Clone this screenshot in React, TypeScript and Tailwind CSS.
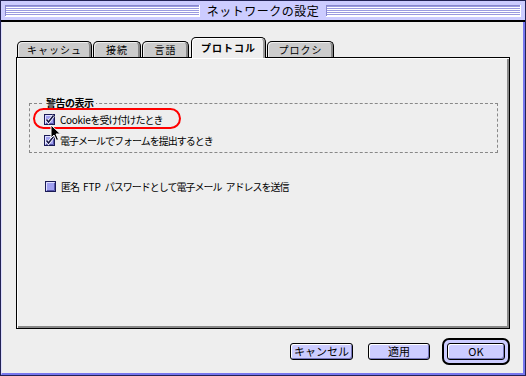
import React from "react";

const Check = ({ checked }: { checked: boolean }) => (
  <svg width="11" height="11" viewBox="0 0 11 11" className="shrink-0">
    <rect x="0.5" y="0.5" width="10" height="10" fill="#a0a0f0" stroke="#1a1a55" />
    <line x1="1.5" y1="1.5" x2="9.5" y2="1.5" stroke="#e0e0ff" />
    <line x1="1.5" y1="1.5" x2="1.5" y2="9.5" stroke="#e0e0ff" />
    <line x1="9.5" y1="2" x2="9.5" y2="9.5" stroke="#5555aa" />
    <line x1="2" y1="9.5" x2="9.5" y2="9.5" stroke="#5555aa" />
    {checked && (
      <>
        <path d="M2.5 5.5 L4.5 8 L9.5 1.5" fill="none" stroke="#ffffff" strokeWidth="3" />
        <path d="M2.5 5.5 L4.5 8 L9.5 1.5" fill="none" stroke="#111144" strokeWidth="1.5" />
      </>
    )}
  </svg>
);

const Tab = ({ label, w, active, ml }: { label: string; w: string; active?: boolean; ml: string }) =>
  active ? (
    <div
      className={`${w} ${ml} h-[21px] -mb-px relative z-10 flex items-center justify-center bg-[#eeeeee] border border-b-0 border-black rounded-t-[5px] shadow-[inset_1px_1px_0_#ffffff,inset_-2px_0_0_#999999] text-[10px] font-bold tracking-[1px] text-black`}
    >
      {label}
    </div>
  ) : (
    <div
      className={`${w} ${ml} h-[16px] flex items-center justify-center bg-[#cccccc] border border-b-0 border-black rounded-t-[5px] shadow-[inset_1px_1px_0_#eeeeee,inset_-2px_0_0_#888888] text-[10px] tracking-[1px] text-black`}
    >
      {label}
    </div>
  );

const Btn = ({ label, w }: { label: string; w: string }) => (
  <div
    className={`${w} h-[17px] flex items-center justify-center bg-[#ccccff] border border-black rounded-[3px] shadow-[inset_1px_1px_0_#ffffff,inset_-1px_-1px_0_#7777bb] text-[11px] text-black`}
  >
    {label}
  </div>
);

export default function App() {
  const stripes =
    "flex-1 h-[12px] bg-[repeating-linear-gradient(to_bottom,#ffffff_0px,#ffffff_1px,#9a9ae0_1px,#9a9ae0_2px)] border-r border-b border-[#ffffff] shadow-[inset_1px_1px_0_#8888cc]";
  return (
    <div className="w-[526px] h-[376px] flex flex-col border border-[#222255] bg-[#ccccff] font-['Noto_Sans_CJK_JP',sans-serif] leading-none">
      <div className="h-[19px] flex items-center px-[4px] bg-[#ccccff]">
        <div className={stripes} />
        <div className="px-[7px] text-[12px] tracking-[0.5px] text-black">ネットワークの設定</div>
        <div className={stripes} />
      </div>
      <div className="h-[2px] bg-black" />
      <div className="flex-1 flex flex-col bg-[#eeeeee] border-l border-l-[#ddddff] border-r-2 border-b-2 border-r-[#7777ee] border-b-[#7777ee] pl-[14px] pr-[12px] pt-[15px]">
        <div className="flex items-end h-[20px]">
          <Tab label="キャッシュ" w="w-[75px]" ml="ml-[1px]" />
          <Tab label="接続" w="w-[48px]" ml="ml-[1px]" />
          <Tab label="言語" w="w-[47px]" ml="ml-[1px]" />
          <Tab label="プロトコル" w="w-[75px]" ml="ml-[2px]" active />
          <Tab label="プロクシ" w="w-[67px]" ml="ml-[1px]" />
        </div>
        <div className="w-[494px] h-[272px] border border-black bg-[#eeeeee] shadow-[inset_1px_1px_0_#ffffff,inset_-2px_-2px_0_#888888] pt-[45px] pl-[12px]">
          <div className="relative w-[469px] h-[50px] border border-dashed border-[#888888] pl-[14px] pt-[10px] flex flex-col gap-[10px]">
            <div className="absolute -top-[6px] left-[14px] px-[2px] bg-[#eeeeee] text-[10px] font-bold tracking-[-0.5px] text-black">
              警告の表示
            </div>
            <div className="flex items-center gap-[5px] text-[10px] tracking-[-1px] text-black">
              <Check checked />
              <span>
                <span className="tracking-[-0.3px]">Cookie</span>を受け付けたとき
              </span>
            </div>
            <div className="flex items-center gap-[5px] text-[10px] tracking-[-1px] text-black">
              <Check checked />
              <span>電子メールでフォームを提出するとき</span>
            </div>
            <div className="absolute left-[3px] top-[4px] w-[148px] h-[21px] border-2 border-[#ff0000] rounded-full" />
            <svg className="absolute left-[20px] top-[20px]" width="12" height="18" viewBox="0 0 12 18">
              <path d="M1 1 L1 14 L4 11 L6.5 16.5 L8.5 15.5 L6 10 L10.5 10 Z" fill="#000000" stroke="#ffffff" strokeWidth="1" />
            </svg>
          </div>
          <div className="flex items-center gap-[5px] mt-[28px] ml-[16px] text-[10px] tracking-[-1px] text-black">
            <Check checked={false} />
            <span className="flex items-center">
              <span>匿名</span>
              <span className="w-[4px]" />
              <span className="tracking-[0px]">FTP</span>
              <span className="w-[4px]" />
              <span>パスワードとして電子メール</span>
              <span className="w-[4px]" />
              <span>アドレスを送信</span>
            </span>
          </div>
        </div>
        <div className="flex items-center justify-end mt-[9px] mr-[1px]">
          <Btn label="キャンセル" w="w-[63px]" />
          <div className="w-[15px]" />
          <Btn label="適用" w="w-[62px]" />
          <div className="w-[12px]" />
          <div className="w-[68px] h-[27px] border-2 border-black rounded-[7px] bg-[#ccccff] p-[3px] flex">
            <div className="flex-1 flex items-center justify-center bg-[#ccccff] border border-black rounded-[3px] shadow-[inset_1px_1px_0_#ffffff,inset_-1px_-1px_0_#7777bb] text-[11px] text-black">
              OK
            </div>
          </div>
        </div>
      </div>
    </div>
  );
}
